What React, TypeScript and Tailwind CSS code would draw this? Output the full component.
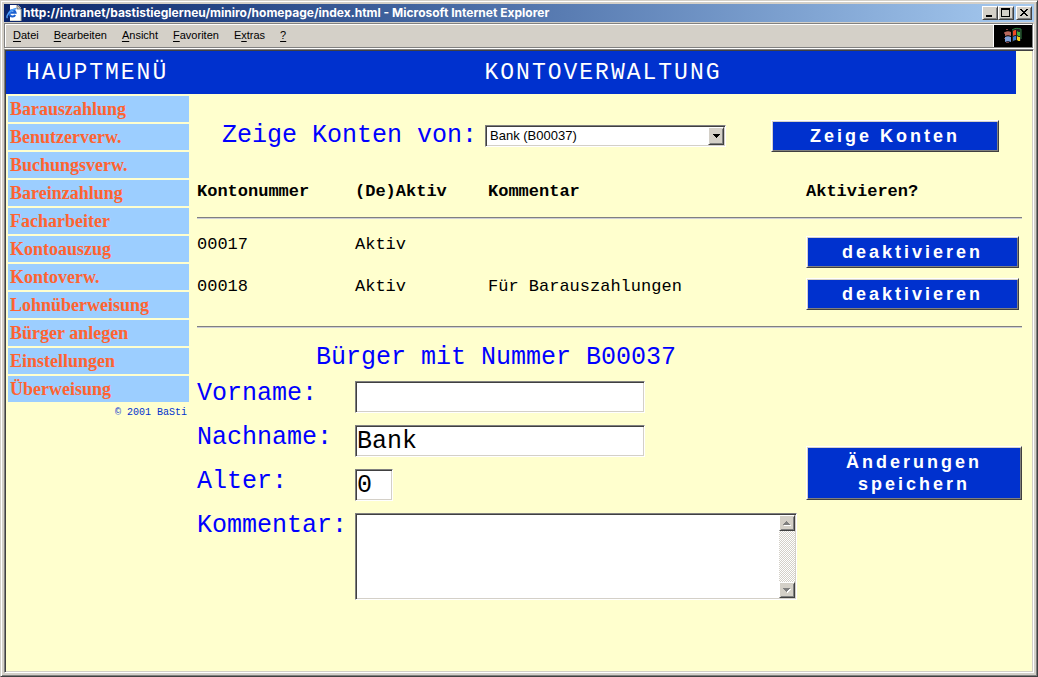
import { clsx } from 'clsx';
import type { ReactNode } from 'react';

const raised =
  'border border-t-white border-l-white border-r-[#404040] border-b-[#404040] shadow-[inset_1px_1px_#d4d0c8,inset_-1px_-1px_#808080]';
const sunken =
  'border border-t-[#808080] border-l-[#808080] border-r-white border-b-white shadow-[inset_1px_1px_#404040,inset_-1px_-1px_#d4d0c8]';
const mono = "font-['Liberation_Mono',monospace]";
const sans = "font-['Liberation_Sans',sans-serif]";
const formLabel = 'text-[25px] leading-[26px] text-[#0000ff]';
const fieldClass = clsx(
  sunken,
  'h-8 rounded-none bg-white px-px pt-[2px] text-[25px] text-black outline-none',
);

const menuItems = [
  { before: '', key: 'D', after: 'atei' },
  { before: '', key: 'B', after: 'earbeiten' },
  { before: '', key: 'A', after: 'nsicht' },
  { before: '', key: 'F', after: 'avoriten' },
  { before: 'E', key: 'x', after: 'tras' },
  { before: '', key: '?', after: '' },
];

const navItems = [
  'Barauszahlung',
  'Benutzerverw.',
  'Buchungsverw.',
  'Bareinzahlung',
  'Facharbeiter',
  'Kontoauszug',
  'Kontoverw.',
  'Lohnüberweisung',
  'Bürger anlegen',
  'Einstellungen',
  'Überweisung',
];

const accounts = [
  { number: '00017', status: 'Aktiv', comment: '' },
  { number: '00018', status: 'Aktiv', comment: 'Für Barauszahlungen' },
];

function PageIcon() {
  return (
    <svg width="16" height="16" viewBox="0 0 16 16" aria-hidden>
      <path d="M4 0h8l3 3v13H4z" fill="#fff" />
      <path d="M15 4v12H4" fill="none" stroke="#b8b8a8" />
      <path d="M11 0v4h4z" fill="#d4d0c8" stroke="#404040" strokeWidth="0.6" />
      <path
        d="M9.2 10A3.2 3.2 0 1 1 9.6 7.8H3.5"
        fill="none"
        stroke="#1a5fd0"
        strokeWidth="2"
      />
      <path
        d="M1.5 13C-.6 11.5 4 4.5 10.5 3.5"
        fill="none"
        stroke="#4f9ff8"
        strokeWidth="1.4"
      />
    </svg>
  );
}

function WindowsFlag() {
  return (
    <svg width="20" height="18" viewBox="0 0 20 18" aria-hidden>
      <path d="M3 2h2v1H3zM1 5h1v2H1zM1 11h1v1H1zM3 15h3v1H3z" fill="#7a4040" />
      <path d="M9 3c3-2 5-2 9-1v12c-4-1-6-1-9 1z" fill="#222" />
      <path d="M9 3c3-2 5-2 9-1v10" fill="none" stroke="#2f7a3f" strokeWidth="1" />
      <path d="M2 5c2-1 4-1 6 0v4c-2-1-4-1-6 0z" fill="#b8685c" />
      <path d="M10 4c1-1 2-1 3-1v5c-1 0-2 0-3 1z" fill="#f04a24" />
      <path d="M14 4c1 1 2 1 3 1v4c-1 0-2 0-3-1z" fill="#3fae3f" />
      <path d="M2 10c2-1 4-1 6 0v5c-2-1-4-1-6 0z" fill="#7f9fd8" />
      <path d="M10 10c1-1 2-1 3-1v4c-1 0-2 0-3 1z" fill="#3a7ad0" />
      <path d="M14 9c1 1 2 1 3 1v4c-1 0-2 0-3-1z" fill="#f5d020" />
    </svg>
  );
}

function WindowButton({ label, children }: { label: string; children: ReactNode }) {
  return (
    <button
      type="button"
      aria-label={label}
      className={clsx(raised, 'flex h-[14px] w-4 items-center justify-center bg-[#d4d0c8]')}
    >
      <svg width="12" height="10" viewBox="0 0 12 10" shapeRendering="crispEdges" aria-hidden>
        {children}
      </svg>
    </button>
  );
}

function ActionButton({ className, children }: { className?: string; children: ReactNode }) {
  return (
    <button
      type="button"
      className={clsx(
        raised,
        sans,
        'min-h-8 bg-[#0031ce] px-6 text-center text-lg leading-[22px] font-bold tracking-[3px] text-white',
        className,
      )}
    >
      {children}
    </button>
  );
}

function ScrollArrow({ label, path }: { label: string; path: string }) {
  return (
    <button
      type="button"
      aria-label={label}
      className={clsx(raised, 'flex size-4 items-center justify-center bg-[#d4d0c8]')}
    >
      <svg width="8" height="5" viewBox="0 0 8 5" shapeRendering="crispEdges" aria-hidden>
        <path d={path} transform="translate(1 1)" fill="#fff" />
        <path d={path} fill="#808080" />
      </svg>
    </button>
  );
}

function TitleBar() {
  return (
    <header className="flex h-[18px] items-center gap-px bg-linear-to-r from-[#0a246a] to-[#a6caf0] pr-[2px] pl-[2px]">
      <PageIcon />
      <h1 className="flex-1 truncate font-['Inter',sans-serif] text-xs font-bold text-white">
        http://intranet/bastistieglerneu/miniro/homepage/index.html - Microsoft Internet Explorer
      </h1>
      <div className="flex">
        <WindowButton label="Minimieren">
          <path d="M2 7h6v2H2z" />
        </WindowButton>
        <WindowButton label="Maximieren">
          <path fillRule="evenodd" d="M1 0h9v9H1zM2 2v6h7V2z" />
        </WindowButton>
      </div>
      <div className="ml-px">
        <WindowButton label="Schließen">
          <path d="M2 1h2v1h1v1h2V2h1V1h2v1H9v1H8v1H7v1h1v1h1v1h1v1H8V7H7V6H5v1H4v1H2V7h1V6h1V5h1V4H4V3H3V2H2z" />
        </WindowButton>
      </div>
    </header>
  );
}

function MenuBar() {
  return (
    <nav className="mt-px mr-px flex h-[25px] border border-[#808080] shadow-[inset_1px_1px_#fff,1px_1px_#fff]">
      <ul className={clsx(sans, 'flex flex-1 items-center gap-[15px] pl-2 text-[11px]')}>
        {menuItems.map((item) => (
          <li key={item.key}>
            <button type="button">
              {item.before}
              <span className="underline underline-offset-2">{item.key}</span>
              {item.after}
            </button>
          </li>
        ))}
      </ul>
      <div className="mt-px flex w-[39px] items-center justify-center border-l border-white bg-black">
        <WindowsFlag />
      </div>
    </nav>
  );
}

function Sidebar() {
  return (
    <aside className="w-[183px] shrink-0 pt-[2px] pl-[2px]">
      <ul className="space-y-[2px]">
        {navItems.map((item) => (
          <li key={item}>
            <a
              href="#"
              className="block h-[26px] bg-[#9cceff] pl-[2px] font-['Liberation_Serif',serif] text-lg leading-[26px] font-bold text-[#ff6331]"
            >
              {item}
            </a>
          </li>
        ))}
      </ul>
      <p className={clsx(mono, 'pt-1 pr-[2px] text-right text-[10px] leading-[14px] text-[#0031ce]')}>
        © 2001 BaSti
      </p>
    </aside>
  );
}

function AccountFilter() {
  return (
    <div className="flex items-center gap-2 pt-[26px] pr-[23px] pl-[25px]">
      <label htmlFor="owner" className={formLabel}>
        Zeige Konten von:
      </label>
      <div className="relative w-[241px]">
        <select
          id="owner"
          defaultValue="B00037"
          className={clsx(
            sunken,
            sans,
            'block h-[22px] w-full appearance-none rounded-none bg-white pl-1 text-[13px] text-black',
          )}
        >
          <option value="B00037">Bank (B00037)</option>
        </select>
        <span
          className={clsx(
            raised,
            'pointer-events-none absolute top-[2px] right-[2px] flex h-[18px] w-4 items-center justify-center bg-[#d4d0c8]',
          )}
        >
          <svg width="7" height="4" viewBox="0 0 7 4" shapeRendering="crispEdges" aria-hidden>
            <path d="M0 0h7v1H6v1H5v1H4v1H3V3H2V2H1V1H0z" />
          </svg>
        </span>
      </div>
      <ActionButton className="ml-auto w-[228px]">Zeige Konten</ActionButton>
    </div>
  );
}

function AccountTable() {
  return (
    <table className="mt-6 w-full table-fixed text-left text-[17px] leading-5">
      <thead>
        <tr className="border-b border-[#808080] shadow-[0_1px_#ceced6]">
          <th className="w-[158px] pt-[6px] pb-[15px]">Kontonummer</th>
          <th className="w-[133px] pt-[6px] pb-[15px]">(De)Aktiv</th>
          <th className="pt-[6px] pb-[15px]">Kommentar</th>
          <th className="w-[216px] pt-[6px] pb-[15px]">Aktivieren?</th>
        </tr>
      </thead>
      <tbody className="border-b border-[#808080] shadow-[0_1px_#ceced6] before:block before:h-[13px] after:block after:h-[11px]">
        {accounts.map((account) => (
          <tr key={account.number} className="h-[42px] align-top">
            <td className="pt-1">{account.number}</td>
            <td className="pt-1">{account.status}</td>
            <td className="pt-1">{account.comment}</td>
            <td className="pt-[5px]">
              <ActionButton className="w-[213px]">deaktivieren</ActionButton>
            </td>
          </tr>
        ))}
      </tbody>
    </table>
  );
}

function CitizenForm() {
  return (
    <form className="pt-[18px]">
      <h2 className={clsx(formLabel, 'pl-[119px]')}>Bürger mit Nummer B00037</h2>
      <div className="mt-[10px] grid grid-cols-[158px_1fr_216px] gap-y-3">
        <label htmlFor="firstName" className={formLabel}>
          Vorname:
        </label>
        <input id="firstName" className={clsx(fieldClass, 'w-[290px]')} />
        <div className="row-span-4 pt-[65px]">
          <ActionButton className="w-full py-1">
            Änderungen
            <br />
            speichern
          </ActionButton>
        </div>
        <label htmlFor="lastName" className={formLabel}>
          Nachname:
        </label>
        <input id="lastName" defaultValue="Bank" className={clsx(fieldClass, 'w-[290px]')} />
        <label htmlFor="age" className={formLabel}>
          Alter:
        </label>
        <input id="age" defaultValue="0" className={clsx(fieldClass, 'w-[38px]')} />
        <label htmlFor="comment" className={formLabel}>
          Kommentar:
        </label>
        <div className={clsx(sunken, 'mr-[9px] flex h-[87px] bg-white p-px')}>
          <textarea
            id="comment"
            className="min-w-0 flex-1 resize-none overflow-hidden px-px text-[25px] leading-7 text-black outline-none"
          />
          <div className="flex w-4 flex-col justify-between bg-[repeating-conic-gradient(#d4d0c8_0_25%,#fff_0_50%)] bg-size-[2px_2px]">
            <ScrollArrow label="Nach oben" path="M3 0h1v1h1v1h1v1h1v1H0V3h1V2h1V1h1z" />
            <ScrollArrow label="Nach unten" path="M0 0h7v1H6v1H5v1H4v1H3V3H2V2H1V1H0z" />
          </div>
        </div>
      </div>
    </form>
  );
}

export default function App() {
  return (
    <div className="flex min-h-screen flex-col border border-t-[#d4d0c8] border-r-[#404040] border-b-[#404040] border-l-[#d4d0c8] bg-[#d4d0c8] p-[3px] text-black shadow-[inset_1px_1px_#fff,inset_-1px_-1px_#808080]">
      <TitleBar />
      <MenuBar />
      <div
        className={clsx(
          mono,
          'mt-px flex flex-1 flex-col border border-t-[#808080] border-r-white border-b-white border-l-[#808080] bg-[#404040] pt-px pl-px',
        )}
      >
        <div className="flex-1 border-r border-b border-[#d4d0c8] bg-[#ffffce]">
          <div className="mr-4 flex h-[43px] items-center bg-[#0031ce] pt-px text-[23px] tracking-[2px] text-white">
            <h2 className="w-[184px] pl-5">HAUPTMENÜ</h2>
            <h2 className="flex-1 text-center">KONTOVERWALTUNG</h2>
          </div>
          <div className="flex">
            <Sidebar />
            <main className="min-w-0 flex-1 pr-[10px] pl-2">
              <AccountFilter />
              <AccountTable />
              <CitizenForm />
            </main>
          </div>
        </div>
      </div>
    </div>
  );
}
